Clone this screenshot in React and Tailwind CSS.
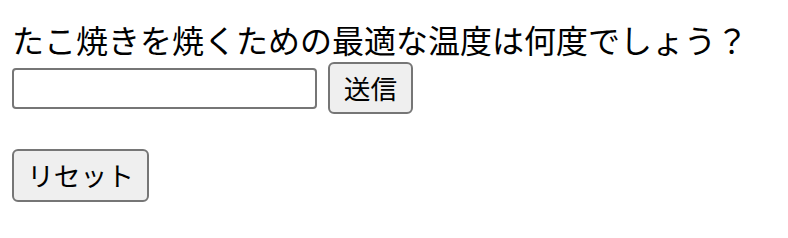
import React from 'react';

const jp = { fontFamily: '"Noto Sans CJK JP", "Noto Sans", sans-serif' };

export default function App() {
    return (
        <div className="w-[788px] h-[238px] bg-white text-black pl-[12px]" style={jp}>
            {/* Question */}
            <p className="pt-[23px] text-[32px] leading-[32px] whitespace-nowrap">
                たこ焼きを焼くための最適な温度は何度でしょう？
            </p>

            {/* Answer form */}
            <div className="mt-[7px] flex items-center gap-[11px]">
                <input
                    type="text"
                    className="w-[305px] h-[41px] border-2 border-[#767676] rounded-[4px] bg-white px-2 text-[26px] outline-none"
                />
                <button className="w-[85px] h-[52px] border-2 border-[#767676] rounded-[6px] bg-[#efefef] text-[26.67px] leading-none flex items-center justify-center">
                    送信
                </button>
            </div>

            <div className="mt-[35px]">
                <button className="w-[137px] h-[53px] border-2 border-[#767676] rounded-[6px] bg-[#efefef] text-[26.67px] leading-none flex items-center justify-center">
                    リセット
                </button>
            </div>
        </div>
    );
}
